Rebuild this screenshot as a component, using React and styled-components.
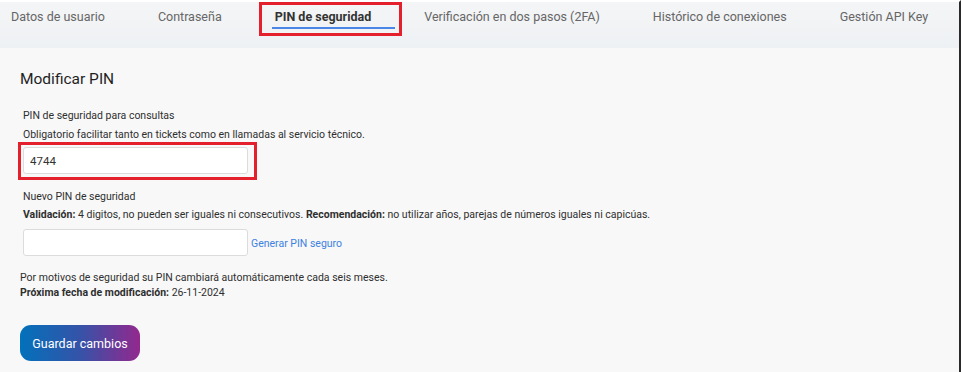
import React from 'react';
import styled, { createGlobalStyle } from 'styled-components';

const GlobalStyle = createGlobalStyle`
  body {
    margin: 0;
    background: #f8f8f8;
    font-family: Roboto, "Liberation Sans", sans-serif;
  }
`;

const Page = styled.div`
  width: 961px;
  height: 372px;
  box-sizing: border-box;
  background: #f8f8f8;
  border-top: 2px solid #ffffff;
  border-right: 2px solid #2a2a2a;
  overflow: hidden;
`;

const TabBar = styled.nav`
  display: flex;
  align-items: flex-start;
  gap: 53px;
  height: 46px;
  padding-left: 11px;
  background: linear-gradient(#f4f5f6, #eef1f4);
`;

const Tab = styled.div`
  position: relative;
  height: 30px;
  line-height: 30px;
  font-size: 12.5px;
  color: ${p => (p.$active ? '#333' : '#666')};
  font-weight: ${p => (p.$active ? 700 : 400)};
  white-space: nowrap;

  ${p => p.$active && `
    &:before {
      content: "";
      position: absolute;
      left: -3px;
      right: -24px;
      top: 25px;
      height: 2px;
      background: #4a86e8;
    }
    &:after {
      content: "";
      position: absolute;
      left: -16px;
      right: -31px;
      top: 0;
      height: 34px;
      box-sizing: border-box;
      border: 3px solid #e3202b;
    }
  `}
`;

const Content = styled.main`
  padding: 21px 20px 0;
  color: #333;
`;

const Title = styled.h2`
  margin: 0 0 17px;
  font-size: 15.5px;
  font-weight: 400;
  line-height: 20px;
  color: #1f1f1f;
`;

const Group = styled.div`
  padding-left: 3px;
  margin-bottom: ${p => p.$gap || 0}px;
`;

const Line = styled.p`
  margin: 0;
  font-size: 10.5px;
  line-height: ${p => p.$lh || 18}px;
  color: #2f2f2f;

  b {
    font-weight: 700;
  }
`;

const Field = styled.div`
  display: flex;
  align-items: center;
  gap: 3px;
  margin-top: ${p => p.$top || 0}px;
`;

const Highlight = styled.div`
  position: relative;

  ${p => p.$marked && `
    &:after {
      content: "";
      position: absolute;
      left: -5px;
      top: -5px;
      width: 239px;
      height: 38px;
      box-sizing: border-box;
      border: 3px solid #e3202b;
    }
  `}
`;

const Input = styled.input`
  display: block;
  width: 225px;
  height: 27px;
  box-sizing: border-box;
  padding: 0 6px;
  border: 1px solid #dcdcdc;
  border-radius: 3px;
  background: #fff;
  font-family: Roboto, "Liberation Sans", sans-serif;
  font-size: 11.5px;
  color: #333;
  outline: none;
`;

const Link = styled.a`
  font-size: 10.5px;
  color: #3d82e0;
  text-decoration: none;
  margin-top: 2px;
`;

const Button = styled.button`
  margin-top: 25px;
  width: 120px;
  height: 36px;
  border: none;
  border-radius: 11px;
  background: linear-gradient(90deg, #0271bb 0%, #3553a8 50%, #93288e 100%);
  color: #fff;
  font-family: Roboto, "Liberation Sans", sans-serif;
  font-size: 12.5px;
  font-weight: 400;
  cursor: pointer;
`;

const tabs = [
  'Datos de usuario',
  'Contraseña',
  'PIN de seguridad',
  'Verificación en dos pasos (2FA)',
  'Histórico de conexiones',
  'Gestión API Key',
];

function App() {
  return (
    <React.Fragment>
      <GlobalStyle />
      <Page>
        <TabBar>
          {tabs.map(t => (
            <Tab key={t} $active={t === 'PIN de seguridad'}>{t}</Tab>
          ))}
        </TabBar>
        <Content>
          <Title>Modificar PIN</Title>
          <Group $gap={14}>
            <Line $lh={19}>PIN de seguridad para consultas</Line>
            <Line $lh={19}>Obligatorio facilitar tanto en tickets como en llamadas al servicio técnico.</Line>
            <Field $top={3}>
              <Highlight $marked>
                <Input defaultValue="4744" />
              </Highlight>
            </Field>
          </Group>
          <Group $gap={14}>
            <Line>Nuevo PIN de seguridad</Line>
            <Line>
              <b>Validación:</b> 4 digitos, no pueden ser iguales ni consecutivos. <b>Recomendación:</b> no utilizar años, parejas de números iguales ni capicúas.
            </Line>
            <Field $top={5}>
              <Input />
              <Link href="#">Generar PIN seguro</Link>
            </Field>
          </Group>
          <Line $lh={15}>Por motivos de seguridad su PIN cambiará automáticamente cada seis meses.</Line>
          <Line $lh={15}><b>Próxima fecha de modificación:</b> 26-11-2024</Line>
          <Button>Guardar cambios</Button>
        </Content>
      </Page>
    </React.Fragment>
  );
}

export default App;
